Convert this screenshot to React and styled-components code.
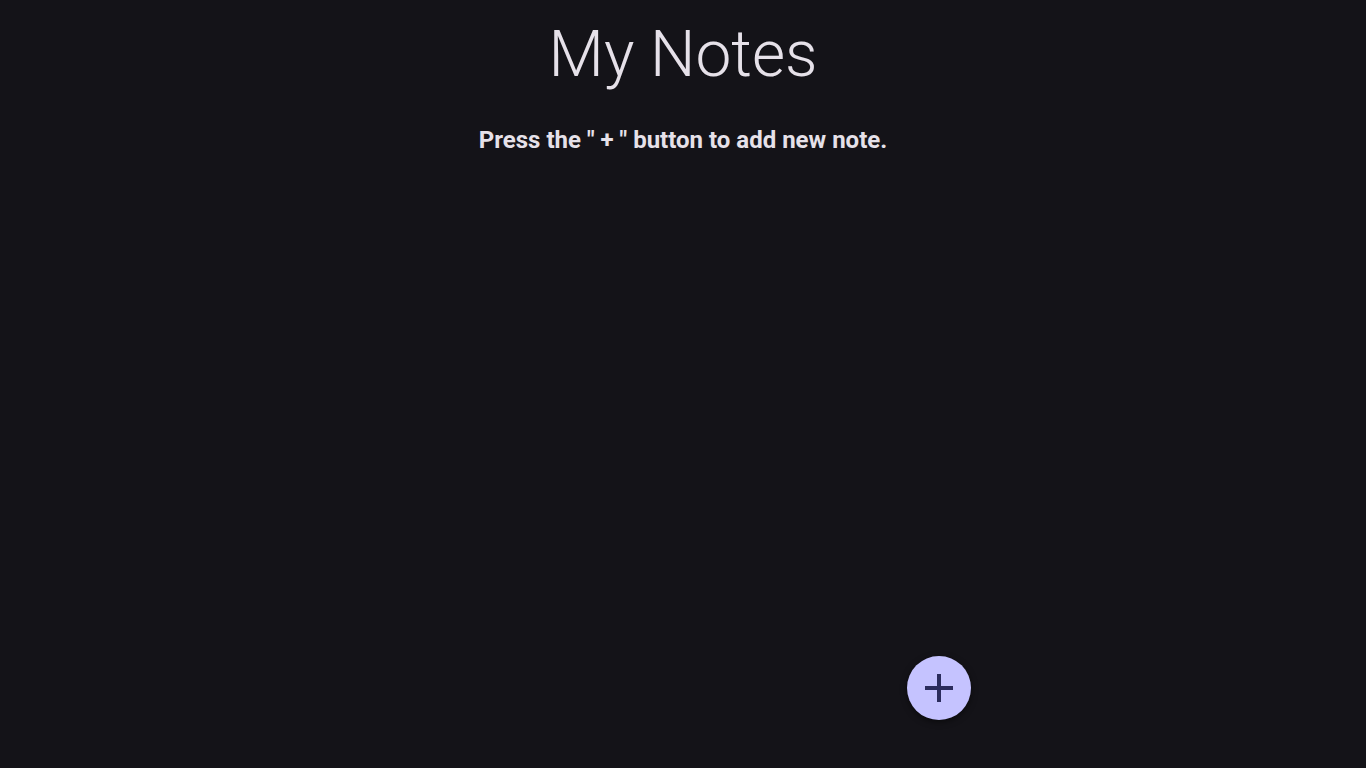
import React from 'react';
import styled, { createGlobalStyle } from 'styled-components';

const GlobalStyle = createGlobalStyle`
  html, body {
    margin: 0;
    padding: 0;
    background-color: #141318;
    color: #e6e1e9;
    font-family: Roboto, "Liberation Sans", sans-serif;
  }
`;

const Page = styled.main`
  position: relative;
  max-width: 576px;
  min-height: 768px;
  margin: 0 auto;
  display: flex;
  flex-direction: column;
  align-items: center;
`;

const Title = styled.h1`
  margin: 17px 0 0;
  font-size: 64px;
  font-weight: 300;
  line-height: 1.2;
  color: #e6e1e9;
`;

const Hint = styled.p`
  margin: 32px 0 0;
  font-size: 24px;
  font-weight: 700;
  color: #e6e1e9;
`;

const AddButton = styled.button`
  position: fixed;
  bottom: 48px;
  left: calc(50% + 224px);
  width: 64px;
  height: 64px;
  border: none;
  border-radius: 50%;
  background-color: #c5c3ff;
  color: #2b2c5c;
  display: flex;
  align-items: center;
  justify-content: center;
  padding: 0;
  cursor: pointer;
  box-shadow: 0 2px 6px rgba(0, 0, 0, 0.5);
`;

const PlusIcon = () => (
  <svg width="48" height="48" viewBox="0 0 24 24" fill="currentColor">
    <path d="M19 13h-6v6h-2v-6H5v-2h6V5h2v6h6v2z" />
  </svg>
);

const App = () => (
  <>
    <GlobalStyle />
    <Page>
      <Title>My Notes</Title>
      <Hint>Press the " + " button to add new note.</Hint>
      <AddButton aria-label="Add note">
        <PlusIcon />
      </AddButton>
    </Page>
  </>
);

export default App;
